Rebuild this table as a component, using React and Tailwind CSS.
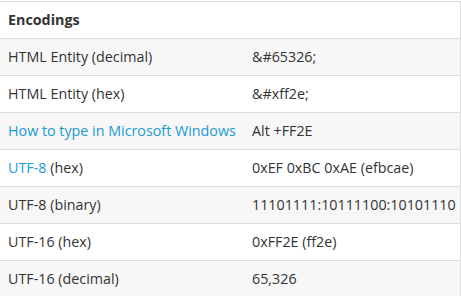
import React from 'react';

const rows = [
  { label: 'HTML Entity (decimal)', value: '&#65326;' },
  { label: 'HTML Entity (hex)', value: '&#xff2e;' },
  { label: 'How to type in Microsoft Windows', link: true, value: 'Alt +FF2E' },
  { label: '(hex)', prefix: 'UTF-8', value: '0xEF 0xBC 0xAE (efbcae)' },
  { label: 'UTF-8 (binary)', value: '11101111:10111100:10101110' },
  { label: 'UTF-16 (hex)', value: '0xFF2E (ff2e)' },
  { label: 'UTF-16 (decimal)', value: '65,326' },
];

export default function App() {
  return (
    <div className="h-[296px] w-[461px] overflow-hidden bg-white pt-px font-['Open_Sans',sans-serif] text-[14.3px] text-[#333]">
      <table className="w-[461px] table-fixed border-collapse">
        <colgroup>
          <col className="w-[244px]" />
          <col />
        </colgroup>
        <thead>
          <tr className="h-[37px] border-t border-b border-r border-[#ddd]">
            <th colSpan={2} className="px-2 text-left font-bold">Encodings</th>
          </tr>
        </thead>
        <tbody>
          {rows.map((row, i) => (
            <tr
              key={i}
              className={`h-[37px] border-b border-r border-[#ddd] ${i % 2 === 0 ? 'bg-[#f7f7f7]' : 'bg-white'}`}
            >
              <td className="whitespace-nowrap px-2">
                {row.link ? (
                  <span className="text-[#1a9ad6]">{row.label}</span>
                ) : row.prefix ? (
                  <>
                    <span className="text-[#1a9ad6]">{row.prefix}</span> {row.label}
                  </>
                ) : (
                  row.label
                )}
              </td>
              <td className="whitespace-nowrap px-2">{row.value}</td>
            </tr>
          ))}
        </tbody>
      </table>
    </div>
  );
}
